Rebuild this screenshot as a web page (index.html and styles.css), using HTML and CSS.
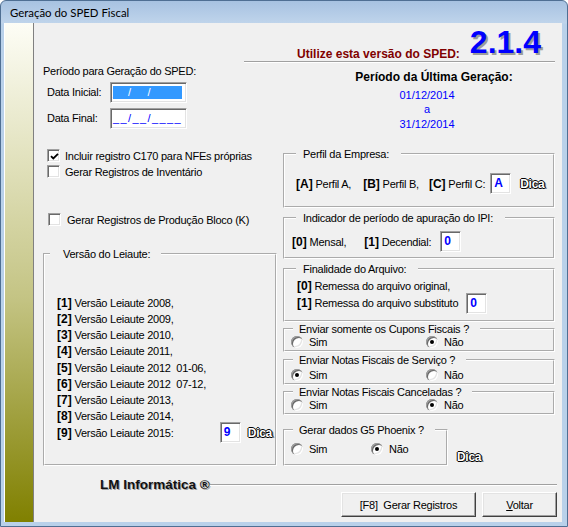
FILE: index.html
```html
<!DOCTYPE html>
<html lang="pt-BR">
<head>
<meta charset="utf-8">
<title>Geração do SPED Fiscal</title>
<link rel="stylesheet" href="styles.css">
</head>
<body>
<div class="window">
  <div class="titlebar">Geração do SPED Fiscal</div>
  <div class="client">
    <div class="sidebar"></div>
    <div class="main">
      <div class="version-bar">
        <span class="use-version">Utilize esta versão do SPED:</span>
        <span class="version">2.1.4</span>
      </div>

      <div class="columns">
        <div class="col-left">
          <div class="period-title">Período para Geração do SPED:</div>
          <div class="date-grid">
            <span class="date-label">Data Inicial:</span>
            <span class="edit date-edit"><span class="sel"><span class="mask">__</span>/<span class="mask">__</span>/<span class="mask">____</span></span></span>
            <span class="date-label">Data Final:</span>
            <span class="edit date-edit">__/__/____</span>
          </div>

          <div class="checks">
            <div class="check"><span class="box"><svg width="9" height="9" viewBox="0 0 9 9"><path d="M1 4.2 L3.3 6.5 L8 1.8" fill="none" stroke="#000" stroke-width="1.8"/></svg></span>Incluir registro C170 para NFEs próprias</div>
            <div class="check"><span class="box"></span>Gerar Registros de Inventário</div>
          </div>
          <div class="check check-k"><span class="box"></span>Gerar Registros de Produção Bloco (K)</div>

          <fieldset class="group group-layout">
            <legend>Versão do Leiaute:</legend>
            <ul class="layout-list">
              <li><b>[1]</b> Versão Leiaute 2008,</li>
              <li><b>[2]</b> Versão Leiaute 2009,</li>
              <li><b>[3]</b> Versão Leiaute 2010,</li>
              <li><b>[4]</b> Versão Leiaute 2011,</li>
              <li><b>[5]</b> Versão Leiaute 2012  01-06,</li>
              <li><b>[6]</b> Versão Leiaute 2012  07-12,</li>
              <li><b>[7]</b> Versão Leiaute 2013,</li>
              <li><b>[8]</b> Versão Leiaute 2014,</li>
              <li class="last"><span><b>[9]</b> Versão Leiaute 2015:</span><span class="edit code code-layout">9</span><span class="dica">Dica</span></li>
            </ul>
          </fieldset>
        </div>

        <div class="col-right">
          <div class="last-gen">
            <div class="last-title">Período da Última Geração:</div>
            <div class="last-dates">
              <div>01/12/2014</div>
              <div>a</div>
              <div>31/12/2014</div>
            </div>
          </div>

          <fieldset class="group group-perfil">
            <legend>Perfil da Empresa:</legend>
            <div class="row perfil-row">
              <span class="opt"><b>[A]</b> Perfil A,</span>
              <span class="opt opt-b"><b>[B]</b> Perfil B,</span>
              <span class="opt opt-c"><b>[C]</b> Perfil C:</span>
              <span class="edit code code-perfil">A</span>
              <span class="dica dica-perfil">Dica</span>
            </div>
          </fieldset>

          <fieldset class="group group-ipi">
            <legend>Indicador de período de apuração do IPI:</legend>
            <div class="row ipi-row">
              <span class="opt"><b>[0]</b> Mensal,</span>
              <span class="opt opt-dec"><b>[1]</b> Decendial:</span>
              <span class="edit code code-ipi">0</span>
            </div>
          </fieldset>

          <fieldset class="group group-fin">
            <legend>Finalidade do Arquivo:</legend>
            <div class="fin-body">
              <div class="fin-line"><b>[0]</b> Remessa do arquivo original,</div>
              <div class="fin-line fin-line2"><span><b>[1]</b> Remessa do arquivo substituto</span><span class="edit code code-fin">0</span></div>
            </div>
          </fieldset>

          <fieldset class="group group-radio group-cupons">
            <legend>Enviar somente os Cupons Fiscais ?</legend>
            <div class="radios">
              <span class="radio-item"><span class="radio"></span>Sim</span>
              <span class="radio-item"><span class="radio on"></span>Não</span>
            </div>
          </fieldset>

          <fieldset class="group group-radio group-servico">
            <legend>Enviar Notas Fiscais de Serviço ?</legend>
            <div class="radios">
              <span class="radio-item"><span class="radio on"></span>Sim</span>
              <span class="radio-item"><span class="radio"></span>Não</span>
            </div>
          </fieldset>

          <fieldset class="group group-radio group-cancel">
            <legend>Enviar Notas Fiscais Canceladas ?</legend>
            <div class="radios">
              <span class="radio-item"><span class="radio"></span>Sim</span>
              <span class="radio-item"><span class="radio on"></span>Não</span>
            </div>
          </fieldset>

          <div class="g5-row">
            <fieldset class="group group-radio group-g5">
              <legend>Gerar dados G5 Phoenix ?</legend>
              <div class="radios radios-g5">
                <span class="radio-item"><span class="radio"></span>Sim</span>
                <span class="radio-item"><span class="radio on"></span>Não</span>
              </div>
            </fieldset>
            <span class="dica dica-g5">Dica</span>
          </div>
        </div>
      </div>

      <div class="brand-row">
        <span class="brand">LM Informática ®</span>
        <span class="rule"></span>
      </div>
      <div class="buttons">
        <button class="btn btn-gen" type="button">[F8]&nbsp; Gerar Registros</button>
        <button class="btn btn-back" type="button"><u>V</u>oltar</button>
      </div>
    </div>
  </div>
</div>
</body>
</html>
```

FILE: styles.css
```css
* { box-sizing: border-box; }

html, body {
  margin: 0;
  padding: 0;
}

body {
  background: #ffffff;
  font-family: "Liberation Sans", Arial, sans-serif;
  font-size: 11px;
  letter-spacing: -0.25px;
  color: #000;
}

.window {
  width: 568px;
  height: 527px;
  display: flex;
  flex-direction: column;
  border: 1px solid #4f6f93;
  border-radius: 6px 6px 0 0;
  padding: 0 5px 4px 3px;
  background: linear-gradient(to bottom, #a7c2e1 0, #bfd4eb 22px, #b9d1ea 23px, #b9d1ea 100%);
}

.titlebar {
  height: 22px;
  line-height: 24px;
  padding-left: 6px;
  font-family: Lato, "Liberation Sans", sans-serif;
  font-size: 11.4px;
  letter-spacing: 0;
  color: #000;
}

.client {
  flex: 1;
  display: flex;
  background: #f0f0f0;
}

.sidebar {
  width: 30px;
  border-left: 1px solid #ffffff;
  border-right: 1px solid #808080;
  background: linear-gradient(to bottom, #fdfdf6 0%, #e4e4c2 25%, #c4c484 55%, #808000 100%);
}

.main {
  flex: 1;
  display: flex;
  flex-direction: column;
}

/* version header */
.version-bar {
  display: flex;
  justify-content: flex-end;
  align-items: flex-end;
  gap: 10px;
  height: 39px;
  margin-left: 210px;
  margin-right: 7px;
  padding-right: 14px;
  border-bottom: 1px solid #a0a0a0;
  box-shadow: 0 1px 0 #ffffff;
}

.use-version {
  font-weight: bold;
  font-size: 12px;
  line-height: 14px;
  letter-spacing: 0;
  color: #800000;
}

.version {
  font-weight: bold;
  font-size: 32px;
  line-height: 32px;
  letter-spacing: 0;
  color: #0000ff;
  text-shadow: 2px 2px 0 #9c9c9c;
  margin-bottom: 3px;
}

/* columns */
.columns {
  display: grid;
  grid-template-columns: 234px 272px;
  column-gap: 6px;
  padding-left: 9px;
}

.col-left,
.col-right {
  display: flex;
  flex-direction: column;
}

.period-title {
  margin-top: 3px;
  line-height: 13px;
}

.date-grid {
  display: grid;
  grid-template-columns: 67px 77px;
  row-gap: 5px;
  align-items: center;
  margin-top: 3.5px;
}

.date-label {
  padding-left: 4px;
}

.edit {
  display: block;
  height: 21px;
  background: #ffffff;
  border: 1px solid;
  border-color: #a0a0a0 #ffffff #ffffff #a0a0a0;
  box-shadow: inset 1px 1px 0 #696969, inset -1px -1px 0 #e3e3e3;
}

.date-edit {
  padding: 3px 0 0 2px;
  line-height: 13px;
  color: #0000ff;
  letter-spacing: 1.4px;
  white-space: pre;
}

.sel {
  display: block;
  height: 13px;
  width: 69px;
  background: #3399ff;
  color: #ffffff;
}

.mask {
  color: #3399ff;
}

.checks {
  margin-top: 19px;
}

.check {
  display: flex;
  align-items: center;
  gap: 5px;
  height: 16px;
  padding-left: 4px;
}

.check-k {
  margin-top: 32px;
  padding-left: 5px;
  gap: 6px;
}

.box {
  width: 13px;
  height: 13px;
  flex: none;
  display: flex;
  align-items: center;
  justify-content: center;
  background: #ffffff;
  border: 1px solid;
  border-color: #a0a0a0 #ffffff #ffffff #a0a0a0;
  box-shadow: inset 1px 1px 0 #696969, inset -1px -1px 0 #e3e3e3;
}

.box svg {
  display: block;
  margin: 1px 0 0 1px;
}

/* group boxes */
.group {
  margin: 0;
  padding: 0;
  min-width: 0;
  border: 2px groove #ffffff;
}

.group legend {
  margin-left: 11px;
  padding: 0 12px 0 7px;
  line-height: 12px;
}

.group-radio legend {
  margin-left: 8px;
  padding: 0 11px 0 6px;
}

.group-layout {
  margin-top: 20.5px;
  height: 218px;
}

.group-layout legend {
  margin-left: 5px;
  padding: 0 11px 0 13px;
}

.layout-list {
  list-style: none;
  margin: 0;
  padding: 34.6px 2px 0 12px;
}

.layout-list li {
  height: 16.25px;
  display: flex;
  align-items: center;
  white-space: pre;
}

b {
  font-size: 12px;
  letter-spacing: 0;
}

.layout-list li.last .code {
  margin-left: auto;
}

.code {
  width: 21px;
  flex: none;
  padding: 2px 0 0 3px;
  font-weight: bold;
  font-size: 12px;
  line-height: 15px;
  letter-spacing: 0;
  color: #0000ff;
}

.dica {
  flex: none;
  font-weight: bold;
  font-size: 12px;
  line-height: 14px;
  letter-spacing: -0.3px;
  color: #ffffff;
  text-shadow:
    1px 0 0 #000, -1px 0 0 #000, 0 1px 0 #000, 0 -1px 0 #000,
    2px 1px 0 #8a8a8a;
  padding: 0 1px;
}

.layout-list .dica {
  margin-left: 6px;
}

/* right column */
.last-gen {
  margin-top: 8px;
  padding-left: 30px;
  text-align: center;
}

.last-title {
  font-weight: bold;
  font-size: 12px;
  line-height: 14px;
  letter-spacing: 0;
}

.last-dates {
  margin-top: 3.5px;
  padding-right: 14px;
  line-height: 14.6px;
  color: #0000ff;
  letter-spacing: 0;
}

.row {
  display: flex;
  align-items: center;
  white-space: pre;
}

.group-perfil {
  margin-top: 17px;
  height: 60px;
}

.perfil-row {
  padding: 13px 0 0 11px;
}

.opt-b { margin-left: 12px; }
.opt-c { margin-left: 10px; }
.code-perfil { margin-left: 5px; }
.dica-perfil { margin-left: 8px; }

.group-ipi {
  margin-top: 4px;
  height: 47px;
}

.ipi-row {
  padding: 7px 0 0 7px;
}

.opt-dec { margin-left: 18px; }
.code-ipi { margin-left: 9px; }

.group-fin {
  margin-top: 4px;
  height: 59px;
}

.fin-body {
  padding: 5px 0 0 12px;
}

.fin-line {
  line-height: 13px;
  white-space: pre;
}

.fin-line2 {
  display: flex;
  align-items: center;
  height: 21px;
}

.code-fin { margin-left: 8px; }

.group-radio {
  height: 29px;
}

.group-cupons { margin-top: 1px; }
.group-servico { margin-top: 2px; height: 31px; }
.group-cancel { margin-top: 1px; }

.radios {
  display: grid;
  grid-template-columns: 135px auto;
  padding: 0 0 0 6px;
  height: 13px;
  align-items: center;
}

.group-servico .radios { margin-top: 2px; }

.radio-item {
  display: flex;
  align-items: center;
  gap: 6px;
}

.radio {
  position: relative;
  width: 12px;
  height: 12px;
  flex: none;
  border-radius: 50%;
  background: #ffffff;
  box-shadow:
    inset 1px 1px 0 #a0a0a0,
    inset 2px 2px 0 #696969,
    inset -1px -1px 0 #ffffff,
    inset -2px -2px 0 #e3e3e3;
}

.radio.on::after {
  content: "";
  position: absolute;
  left: 4px;
  top: 4px;
  width: 4px;
  height: 4px;
  border-radius: 50%;
  background: #000;
}

.g5-row {
  display: flex;
  align-items: flex-end;
  margin-top: 9px;
}

.group-g5 {
  width: 165px;
  height: 42px;
}

.radios-g5 {
  grid-template-columns: 80px auto;
  margin-top: 6px;
}

.dica-g5 {
  margin: 0 0 2px 8px;
}

/* footer */
.brand-row {
  display: flex;
  align-items: center;
  margin-top: 12px;
  padding-left: 66px;
  padding-right: 5px;
}

.brand {
  font-weight: bold;
  font-size: 13.5px;
  line-height: 14px;
  letter-spacing: 0;
  color: #111;
  text-shadow: 1px 1px 0 #a0a0a0;
}

.rule {
  flex: 1;
  border-top: 1px solid #a0a0a0;
  border-bottom: 1px solid #ffffff;
}

.buttons {
  display: flex;
  justify-content: flex-end;
  gap: 6px;
  padding-right: 5px;
}

.btn {
  height: 25px;
  margin: 0;
  padding: 0;
  font-family: "Liberation Sans", Arial, sans-serif;
  font-size: 11px;
  letter-spacing: -0.25px;
  color: #000;
  background: #f0f0f0;
  border: 1px solid;
  border-color: #ffffff #404040 #404040 #ffffff;
  box-shadow: inset -1px -1px 0 #a0a0a0, inset 1px 1px 0 #e3e3e3;
}

.btn-gen { width: 135px; }
.btn-back { width: 75px; }
```
